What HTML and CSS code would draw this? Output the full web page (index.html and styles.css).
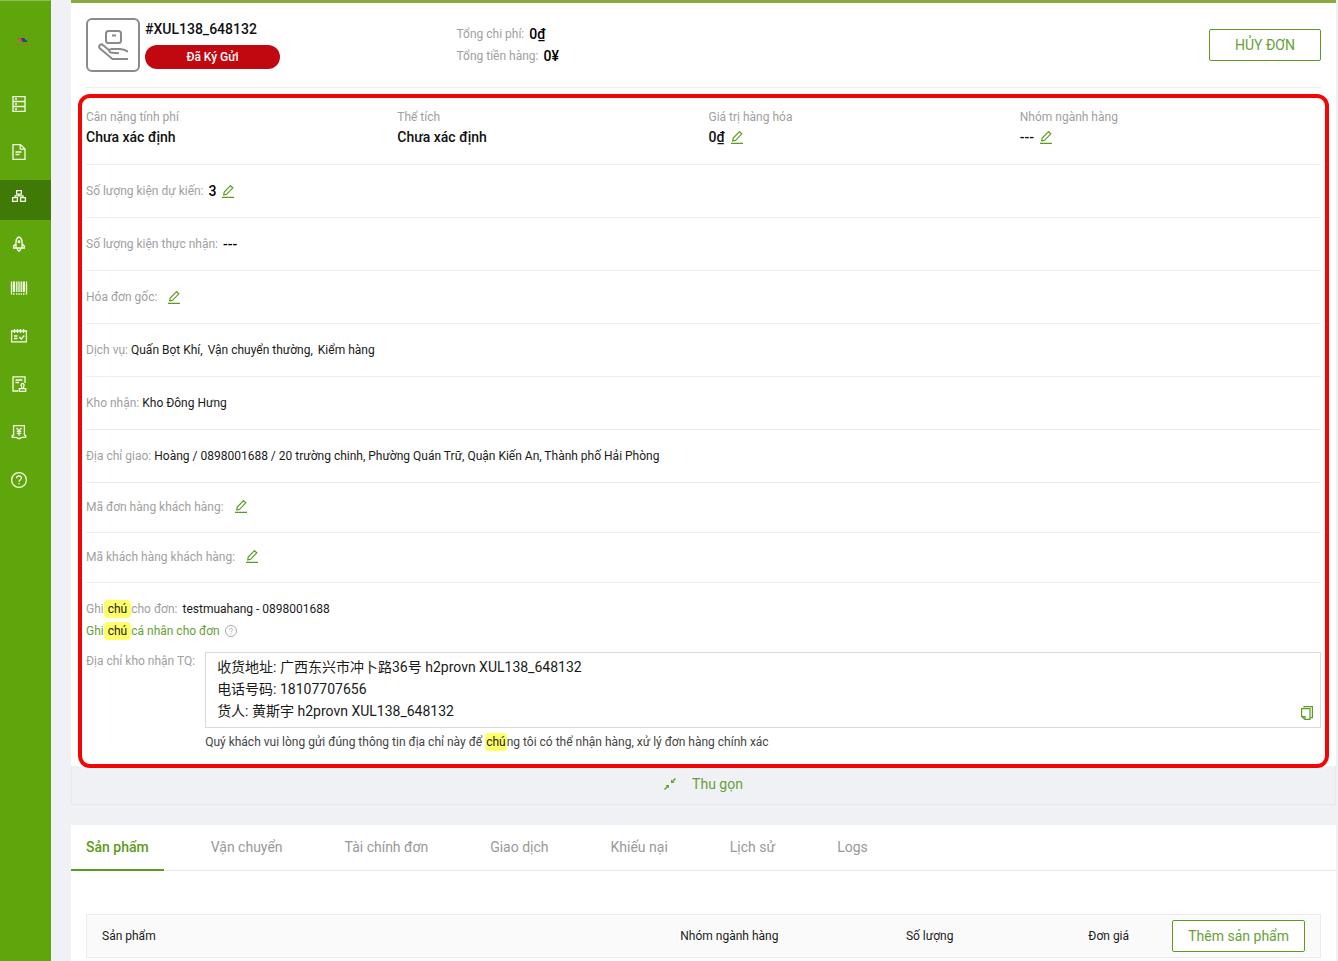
FILE: index.html
```html
<!DOCTYPE html>
<html lang="vi">
<head>
<meta charset="utf-8">
<meta name="viewport" content="width=device-width, initial-scale=1">
<title>#XUL138_648132</title>
<link rel="stylesheet" href="styles.css">
</head>
<body>
<svg class="sprite" aria-hidden="true">
  <symbol id="pencil" viewBox="0 0 12 13">
    <path d="M0 12.4h12" stroke-width="1.3"/>
    <path stroke-width="1.2" d="M1.800 9.900l.4-2.900L8.500.7l2.300 2.100L4.600 9.300z"/>
  </symbol>
</svg>
<div class="app">
  <nav class="sidebar" aria-label="Menu">
    <a class="logo" href="#" aria-label="Logo">
      <svg width="22" height="10" viewBox="0 0 22 10"><path d="M6 1h4l3 4h-3z" fill="#d8435f" stroke="none"/><path d="M10 1h3l4 4h-5z" fill="#2d4180" stroke="none"/><path d="M1 7.500h20" stroke="#b5603c" stroke-dasharray="2 1" opacity=".7"/></svg>
    </a>
    <a class="item" href="#" aria-label="Đơn hàng"><svg width="16" height="16" viewBox="0 0 16 16"><path d="M2 .6h12v14.8H2zM2 5.5h12M2 10.5h12M4 3h2M4 8h2M4 13h2"/></svg></a>
    <a class="item" href="#" aria-label="Chứng từ"><svg width="16" height="16" viewBox="0 0 16 16"><path d="M2 .6h7.5L14 5v10.4H2zM9.2.8V5.2H14M4.5 8h6M4.5 10.5h4"/></svg></a>
    <a class="item active" href="#" aria-label="Ký gửi"><svg width="16" height="16" viewBox="0 0 16 16"><path d="M5.600 2.600h4.800v3.600H5.600zM1.600 9.600h4.800v3.800H1.600zM9.600 9.600h4.800v3.800H9.600zM8 6.200v1.600M4 9.600V7.800h8v1.800"/></svg></a>
    <a class="item tight" href="#" aria-label="Vận chuyển"><svg width="16" height="16" viewBox="0 0 16 16"><path d="M5 12V5.500C5 3.300 6.200 1.800 8 .9c1.800.9 3 2.400 3 4.600V12zM5 7.500l-2.400 2.800V12h10.800v-1.700L11 7.500M6 12c0 1.700.8 2.300 2 3.200 1.200-.9 2-1.500 2-3.200"/><circle cx="8" cy="5.800" r=".8"/></svg></a>
    <a class="item tight" href="#" aria-label="Kiện hàng"><svg width="18" height="16" viewBox="0 0 18 16"><path d="M1.500 1.500v13M6.800 1.500V12M9 1.500V12M11.200 1.500V12M16.500 1.500v13M3 14h1.500M6.200 14h1.300M8.400 14h1.300M10.600 14h1.300M13 14h1.500"/><path d="M4 1.500V12M13.800 1.500V12" stroke-width="2.200"/></svg></a>
    <a class="item" href="#" aria-label="Lịch"><svg width="18" height="16" viewBox="0 0 18 16"><path d="M1.600 3h14.800v10.800H1.600zM4.500 1v4M7.500 1v4M10.500 1v4M13.500 1v4M4 8h3.500M4 10.500h3.500M9.300 9l2 2 3-3.500"/></svg></a>
    <a class="item" href="#" aria-label="Yêu cầu"><svg width="16" height="16" viewBox="0 0 16 16"><path d="M7 15H2V.8h12V7M4.500 4h7M4.500 6.500h3.500M8.300 12.600h6.400v2.700H8.300zM10.500 12.400c.4-1 .2-1.600-.1-2.200-.8-1.500.2-2.700 1.200-2.700s2 1.200 1.200 2.700c-.3.600-.5 1.200-.1 2.200"/></svg></a>
    <a class="item" href="#" aria-label="Tài chính"><svg width="16" height="16" viewBox="0 0 16 16"><path d="M2.600 11.500V1.600h10.800v9.900M2.600 11.300H1.300v2H5c1 0 1.700 1.300 3 1.300s2-1.300 3-1.300h3.700v-2h-1.300M5.500 3.800L8 6.800l2.500-3M8 6.800v5M5.700 7.300h4.600M5.700 9.400h4.600"/></svg></a>
    <a class="item" href="#" aria-label="Trợ giúp"><svg width="18" height="18" viewBox="0 0 18 18"><circle cx="9" cy="9" r="7.400"/><path d="M6.600 7.300c0-3.300 4.900-3 4.900-.3C11.500 8.700 9 8.700 9 10.700M9 12v1.200"/></svg></a>
  </nav>

  <main class="content">
    <section class="order">
      <header class="order-head">
        <div class="identity">
          <div class="order-icon"><svg width="30" height="32" viewBox="0 0 30 32"><rect x="8" y="2" width="15" height="12" rx="2.500"/><path d="M14 6.500h4M30 30H14.500L2 19.500C-.2 17 2.800 14 5.200 16.200L12 22M30 22.800c-2.500-2-5-2.800-8-2.800h-8c-3.700 0-3.500 3.500 0 3.700l7 .5"/></svg></div>
          <div class="identity-text">
            <h1>#XUL138_648132</h1>
            <span class="status">Đã Ký Gửi</span>
          </div>
        </div>
        <div class="totals">
          <div><span class="label">Tổng chi phí:</span><strong>0₫</strong></div>
          <div><span class="label">Tổng tiền hàng:</span><strong>0¥</strong></div>
        </div>
        <button class="btn cancel" type="button">HỦY ĐƠN</button>
      </header>

      <div class="details">
        <div class="metrics">
          <div><span class="label">Cân nặng tính phí</span><p>Chưa xác định</p></div>
          <div><span class="label">Thể tích</span><p>Chưa xác định</p></div>
          <div><span class="label">Giá trị hàng hóa</span><p>0₫ <button class="edit" type="button" aria-label="Sửa giá trị"><svg><use href="#pencil"/></svg></button></p></div>
          <div><span class="label">Nhóm ngành hàng</span><p>--- <button class="edit" type="button" aria-label="Sửa nhóm"><svg><use href="#pencil"/></svg></button></p></div>
        </div>
        <div class="row wide"><span class="label">Số lượng kiện dự kiến:</span><strong>3</strong><button class="edit" type="button" aria-label="Sửa số lượng"><svg><use href="#pencil"/></svg></button></div>
        <div class="row wide"><span class="label">Số lượng kiện thực nhận:</span><strong>---</strong></div>
        <div class="row empty"><span class="label">Hóa đơn gốc:</span><button class="edit" type="button" aria-label="Sửa hóa đơn"><svg><use href="#pencil"/></svg></button></div>
        <div class="row"><span class="label">Dịch vụ:</span><span class="services"><span>Quấn Bọt Khí,</span><span>Vận chuyển thường,</span><span>Kiểm hàng</span></span></div>
        <div class="row"><span class="label">Kho nhận:</span><span>Kho Đông Hưng</span></div>
        <div class="row"><span class="label">Địa chỉ giao:</span><span>Hoàng / 0898001688 / 20 trường chinh, Phường Quán Trữ, Quận Kiến An, Thành phố Hải Phòng</span></div>
        <div class="row empty short"><span class="label">Mã đơn hàng khách hàng:</span><button class="edit" type="button" aria-label="Sửa mã đơn hàng"><svg><use href="#pencil"/></svg></button></div>
        <div class="row empty short"><span class="label">Mã khách hàng khách hàng:</span><button class="edit" type="button" aria-label="Sửa mã khách hàng"><svg><use href="#pencil"/></svg></button></div>

        <div class="notes">
          <div class="note"><span class="label">Ghi<mark>chú</mark>cho đơn:</span><span>testmuahang - 0898001688</span></div>
          <div class="note"><a href="#">Ghi<mark>chú</mark>cá nhân cho đơn</a><svg class="help" viewBox="0 0 12 12"><circle cx="6" cy="6" r="5.500"/><path d="M4.500 4.900c0-2.100 3-1.900 3-.2C7.500 5.800 6 5.800 6 7.200M6 8.300v.9"/></svg></div>
        </div>
        <div class="warehouse">
          <span class="label">Địa chỉ kho nhận TQ:</span>
          <div class="warehouse-main">
            <div class="address">
              <div lang="zh">
                <p>收货地址: 广西东兴市冲卜路36号 h2provn XUL138_648132</p>
                <p>电话号码: 18107707656</p>
                <p>货人: 黄斯宇 h2provn XUL138_648132</p>
              </div>
              <button class="copy" type="button" aria-label="Sao chép"><svg viewBox="0 0 12 14"><path d="M3 1.500V.6h8.400v11H9.500M.6 2.600H9v10.700H4L.6 10.500zM.6 10.500H4v2.800"/></svg></button>
            </div>
            <p class="hint">Quý khách vui lòng gửi đúng thông tin địa chỉ này để <mark>chú</mark>ng tôi có thể nhận hàng, xử lý đơn hàng chính xác</p>
          </div>
        </div>
      </div>
      <button class="collapse" type="button"><svg viewBox="0 0 12 12"><path d="M.5 11.500l3.500-3.500M11.500.5L8 4"/><path class="tip" d="M1.500 7h3.500v3.500zM10.500 5H7V1.500z"/></svg>Thu gọn</button>
    </section>

    <section class="products">
      <div class="tabs" role="tablist">
        <button class="tab selected" role="tab" aria-selected="true" type="button">Sản phẩm</button>
        <button class="tab" role="tab" type="button">Vận chuyển</button>
        <button class="tab" role="tab" type="button">Tài chính đơn</button>
        <button class="tab" role="tab" type="button">Giao dịch</button>
        <button class="tab" role="tab" type="button">Khiếu nại</button>
        <button class="tab" role="tab" type="button">Lịch sử</button>
        <button class="tab" role="tab" type="button">Logs</button>
      </div>
      <div class="panel">
        <table>
          <thead><tr>
            <th class="c-product">Sản phẩm</th><th class="c-group">Nhóm ngành hàng</th><th class="c-qty">Số lượng</th><th class="c-price">Đơn giá</th>
            <th class="c-action"><button class="btn" type="button">Thêm sản phẩm</button></th>
          </tr></thead>
        </table>
      </div>
    </section>
  </main>
</div>
</body>
</html>
```
FILE: styles.css
```css
:root {
  --green: #5fa60d;
  --line-green: #5c9a20;
  --text-green: #689f38;
  --muted: #a0a0a0;
  --page: #eff1f5;
  --rule: #ededed;
}
* { box-sizing: border-box; }
body {
  margin: 0;
  background: var(--page);
  color: #1a1a1a;
  font: 12px/22px Roboto, "Noto Sans CJK SC", sans-serif;
}
h1, p { margin: 0; }
button { font: inherit; cursor: pointer; }
a { color: var(--text-green); text-decoration: none; }
svg { display: block; fill: none; stroke: currentColor; }
strong { font-size: 14px; font-weight: 500; color: #000; }
mark {
  padding: 2px 4px;
  border-radius: 4px;
  background: #ffff66;
  color: #222;
}
.sprite { position: absolute; width: 0; height: 0; }
.label { color: var(--muted); }

.app { display: flex; min-height: 100vh; }

.sidebar { flex: 0 0 51px; border-top: 1px solid #8dbd54; background: var(--green); color: #fff; }
.logo { display: flex; align-items: center; height: 75px; padding: 6px 0 0 11px; }
.item {
  display: flex;
  align-items: center;
  justify-content: center;
  height: 40px;
  margin-top: 8px;
  padding-right: 13px;
  color: #f6ffe9;
}
.item.tight { margin-top: 4px; }
.item.active { padding-bottom: 8px; background: #3f7a06; }
.item svg { stroke-width: 1.3; }

.content {
  flex: 1;
  display: flex;
  flex-direction: column;
  gap: 20px;
  min-width: 0;
  padding: 0 2px 0 20px;
}
.order { border-top: 3px solid #8aaa3e; background: #fff; }
.order-head {
  display: flex;
  align-items: flex-start;
  height: 85px;
  margin: 0 15px;
  padding-top: 15px;
  border-bottom: 1px solid var(--rule);
}
.identity { display: flex; gap: 5px; width: 30%; }
.order-icon {
  display: flex;
  align-items: center;
  justify-content: center;
  width: 54px;
  height: 54px;
  border: 2px solid #8a8a8a;
  border-radius: 6px;
  color: #8a8a8a;
}
.order-icon svg { stroke-width: 2; }
h1 { font-size: 14px; font-weight: 500; line-height: 22px; color: #111; }
.status {
  display: block;
  width: 135px;
  margin-top: 5px;
  border-radius: 12px;
  background: #c10810;
  color: #fff;
  font-weight: 500;
  line-height: 24px;
  text-align: center;
}
.totals { flex: 1; padding-top: 5px; }
.totals div { display: flex; gap: 5px; }
.btn {
  height: 32px;
  padding: 0 15px;
  border: 1px solid var(--line-green);
  border-radius: 2px;
  background: #fff;
  color: var(--text-green);
  font-size: 14px;
  font-weight: 400;
  line-height: 28px;
  white-space: nowrap;
}
.cancel { width: 112px; margin-top: 11px; }

.details { position: relative; margin: 0 15px; }
.details::after {
  content: "";
  position: absolute;
  inset: 6px -8px -2px;
  border: 4px solid #f20505;
  border-radius: 12px;
  pointer-events: none;
}
.metrics {
  display: grid;
  grid-template-columns: repeat(4, 1fr);
  gap: 10px;
  padding: 18px 0;
  border-bottom: 1px solid var(--rule);
}
.metrics .label { display: block; }
.metrics p {
  display: flex;
  align-items: center;
  gap: 6px;
  line-height: 18px;
  font-size: 14px;
  font-weight: 500;
  color: #111;
}
.edit {
  display: block;
  padding: 0;
  border: 0;
  background: none;
  color: var(--line-green);
}
.edit svg { width: 12px; height: 13px; }
.row {
  display: flex;
  align-items: center;
  gap: 3px;
  min-height: 53px;
  border-bottom: 1px solid var(--rule);
}
.row.wide { gap: 5px; }
.row.empty { gap: 11px; }
.row.short { min-height: 50px; padding-bottom: 2px; }
.services { display: flex; gap: 5px; }

.notes { padding-top: 15px; }
.note { display: flex; align-items: center; gap: 5px; }
.help { width: 12px; height: 12px; color: #aaa; }
.warehouse { display: flex; gap: 10px; padding: 10px 0 13px; }
.warehouse > .label { line-height: 18px; }
.warehouse-main { flex: 1; }
.address {
  display: flex;
  align-items: flex-end;
  justify-content: space-between;
  padding: 3px 7px 5px 11px;
  border: 1px solid #d9d9d9;
  font-size: 14px;
}
.copy { padding: 0 0 2px; border: 0; background: none; color: var(--line-green); }
.copy svg { width: 12px; height: 14px; stroke-width: 1.2; }
.hint { padding-top: 3px; color: #444; }
.hint mark { padding: 2px 1px; }

.collapse {
  display: flex;
  align-items: center;
  justify-content: center;
  gap: 16px;
  width: 100%;
  height: 39px;
  padding: 0 0 3px;
  border: 1px solid #e6e8eb;
  border-top: 0;
  background: var(--page);
  color: var(--text-green);
  font-size: 14px;
}
.collapse svg { width: 12px; height: 12px; stroke-width: 1.5; }
.collapse .tip { fill: currentColor; stroke: none; }

.products { flex: 1; background: #fff; }
.tabs { display: flex; gap: 32px; height: 46px; border-bottom: 1px solid #e8e8e8; }
.tab {
  height: 46px;
  padding: 0 15px;
  border: 0;
  border-bottom: 2px solid transparent;
  background: none;
  color: #999;
  font-size: 14px;
}
.tab.selected { border-color: var(--line-green); color: #5c9a20; font-weight: 500; }
.panel { padding: 43px 15px 0; }
table {
  width: 100%;
  table-layout: fixed;
  border: 1px solid #ececec;
  border-collapse: separate;
  border-spacing: 0;
  background: #fafafa;
}
th { height: 42px; padding: 0 15px; font-weight: 400; text-align: left; white-space: nowrap; }
.c-product { width: 46.9%; }
.c-group { width: 18.3%; }
.c-qty { width: 14.8%; }
.c-price { width: 6.5%; }
.c-action { padding-left: 0; text-align: right; }
```
